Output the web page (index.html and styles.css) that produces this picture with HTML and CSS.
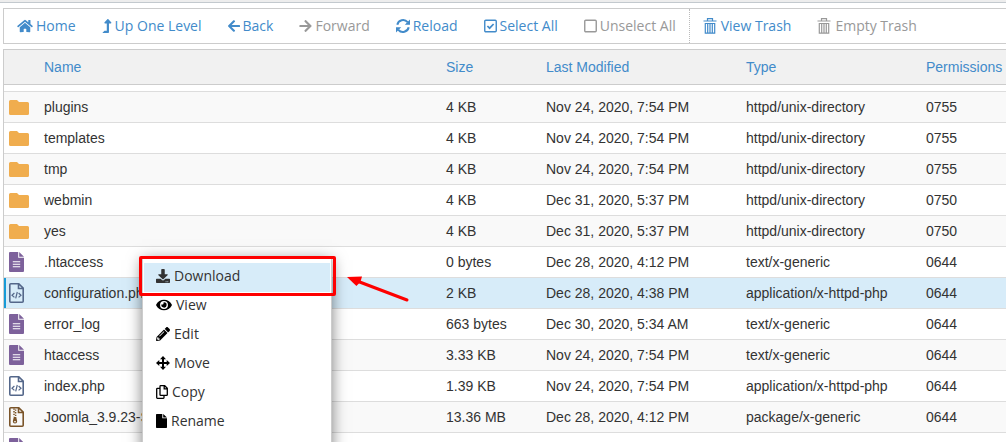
FILE: index.html
```html
<!DOCTYPE html>
<html lang="en">
<head>
<meta charset="utf-8">
<title>File Manager</title>
<link rel="stylesheet" href="styles.css">
</head>
<body>
<svg class="sprite" aria-hidden="true">
  <symbol id="home" viewBox="0 0 576 512"><path d="M280.37 148.26L96 300.11V464a16 16 0 0 0 16 16l112.06-.29a16 16 0 0 0 15.92-16V368a16 16 0 0 1 16-16h64a16 16 0 0 1 16 16v95.64a16 16 0 0 0 16 16.05L464 480a16 16 0 0 0 16-16V300L295.67 148.26a12.19 12.19 0 0 0-15.3 0zM571.6 251.47L488 182.56V44.05a12 12 0 0 0-12-12h-56a12 12 0 0 0-12 12v72.61L318.47 43a48 48 0 0 0-61 0L4.34 251.47a12 12 0 0 0-1.6 16.9l25.5 31A12 12 0 0 0 45.15 301l235.22-193.74a12.19 12.19 0 0 1 15.3 0L530.9 301a12 12 0 0 0 16.9-1.6l25.5-31a12 12 0 0 0-1.7-16.93z"/></symbol>
  <symbol id="up" viewBox="0 0 320 512"><path d="M313.553 119.669L209.587 7.666c-9.485-10.214-25.676-10.229-35.174 0L70.438 119.669C56.232 134.969 67.062 160 88.025 160H152v272H68.024a12 12 0 0 0-8.485 3.515l-56 56C-4.021 499.074 1.333 512 12.024 512H208c13.255 0 24-10.745 24-24V160h63.966c20.878 0 31.851-24.969 17.587-40.331z"/></symbol>
  <symbol id="arrow" viewBox="0 0 448 512"><path d="M257.5 445.1l-22.2 22.2c-9.4 9.4-24.6 9.4-33.9 0L7 273c-9.4-9.4-9.4-24.6 0-33.9L201.4 44.7c9.4-9.4 24.6-9.4 33.9 0l22.2 22.2c9.5 9.5 9.3 25-.4 34.3L136.6 216H424c13.3 0 24 10.7 24 24v32c0 13.3-10.7 24-24 24H136.6l120.5 114.8c9.8 9.3 10 24.8.4 34.3z"/></symbol>
  <symbol id="reload" viewBox="0 0 14 14"><path d="M1.3 5.8A5.9 5.9 0 0 1 11.6 3.2M12.7 8.2A5.9 5.9 0 0 1 2.4 10.8" fill="none" stroke="currentColor" stroke-width="2"/><path d="M14 .6v5.2H8.8zM0 13.4V8.2h5.2z"/></symbol>
  <symbol id="checked" viewBox="0 0 13 14"><rect x=".75" y="1.25" width="11.5" height="11.5" rx="1" fill="none" stroke="currentColor" stroke-width="1.4"/><path d="M3.4 7l2.2 2.2 4-4.2" fill="none" stroke="currentColor" stroke-width="1.7"/></symbol>
  <symbol id="unchecked" viewBox="0 0 13 14"><rect x=".75" y="1.25" width="11.5" height="11.5" rx="1" fill="none" stroke="currentColor" stroke-width="1.4"/></symbol>
  <symbol id="trash" viewBox="0 0 13 16"><path d="M4 2.4V.7h5v1.7M0 3h13M1.6 5.5h9.8M1.8 5v10.2h9.4V5M4.2 5.5v9M6.5 5.5v9M8.8 5.5v9" fill="none" stroke="currentColor" stroke-width="1.2"/></symbol>
  <symbol id="folder" viewBox="0 0 20 15"><path d="M1.5 0H8l2 2h8.5A1.5 1.5 0 0 1 20 3.5v10a1.5 1.5 0 0 1-1.5 1.5h-17A1.5 1.5 0 0 1 0 13.5v-12A1.5 1.5 0 0 1 1.5 0z"/></symbol>
  <symbol id="text-file" viewBox="0 0 15 20"><path d="M1 0h8.2v5.8H15V19a1 1 0 0 1-1 1H1a1 1 0 0 1-1-1V1a1 1 0 0 1 1-1zM10.2 0L15 4.8h-4.8z"/><path d="M3.8 9.7h7.4M3.8 12.2h7.4M3.8 14.7h7.4" stroke="#fff" stroke-width="1.1"/></symbol>
  <symbol id="code-file" viewBox="0 0 15 20"><path d="M1.8.8h8l4.4 4.4v13a1 1 0 0 1-1 1H1.8a1 1 0 0 1-1-1V1.8a1 1 0 0 1 1-1zM9.5.8v4.7h4.7" fill="none" stroke="currentColor" stroke-width="1.6"/><path d="M5.4 10L3 12.2l2.4 2.2M9.6 10l2.4 2.2-2.4 2.2M8.3 9l-1.6 6.4" fill="none" stroke="currentColor" stroke-width="1.2"/></symbol>
  <symbol id="zip-file" viewBox="0 0 15 20"><path d="M1.8.8h8l4.4 4.4v13a1 1 0 0 1-1 1H1.8a1 1 0 0 1-1-1V1.8a1 1 0 0 1 1-1zM9.5.8v4.7h4.7" fill="none" stroke="currentColor" stroke-width="1.6"/><path d="M5 1.5v8M6.6 2.5v8" fill="none" stroke="currentColor" stroke-width="1.5" stroke-dasharray="1.3 1.3"/><path d="M4.8 10h2.4l1 4.2a2.2 2.2 0 1 1-4.4 0zM5 14.2v1h2v-1z" fill-rule="evenodd"/></symbol>
  <symbol id="download" viewBox="0 0 512 512"><path d="M216 0h80c13.3 0 24 10.7 24 24v168h87.7c17.8 0 26.7 21.5 14.1 34.1L269.7 378.3c-7.5 7.5-19.8 7.5-27.3 0L90.1 226.1c-12.6-12.6-3.7-34.1 14.1-34.1H192V24c0-13.3 10.7-24 24-24zm296 376v112c0 13.3-10.7 24-24 24H24c-13.3 0-24-10.7-24-24V376c0-13.3 10.7-24 24-24h146.7l49 49c20.1 20.1 52.5 20.1 72.6 0l49-49H488c13.3 0 24 10.7 24 24zm-124 88c0-11-9-20-20-20s-20 9-20 20 9 20 20 20 20-9 20-20zm64 0c0-11-9-20-20-20s-20 9-20 20 9 20 20 20 20-9 20-20z"/></symbol>
  <symbol id="eye" viewBox="0 0 576 512"><path d="M572.52 241.4C518.29 135.59 410.93 64 288 64S57.68 135.64 3.48 241.41a32.35 32.35 0 0 0 0 29.19C57.71 376.41 165.07 448 288 448s230.32-71.64 284.52-177.41a32.35 32.35 0 0 0 0-29.19zM288 400a144 144 0 1 1 144-144 143.93 143.93 0 0 1-144 144zm0-240a95.31 95.31 0 0 0-25.31 3.79 47.85 47.85 0 0 1-66.9 66.9A95.78 95.78 0 1 0 288 160z"/></symbol>
  <symbol id="pencil" viewBox="0 0 512 512"><path d="M497.9 142.1l-46.1 46.1c-4.7 4.7-12.3 4.7-17 0l-111-111c-4.7-4.7-4.7-12.3 0-17l46.1-46.1c18.7-18.7 49.1-18.7 67.9 0l60.1 60.1c18.8 18.7 18.8 49.1 0 67.9zM284.2 99.8L21.6 362.4.4 483.9c-2.9 16.4 11.4 30.6 27.8 27.8l121.5-21.3 262.6-262.6c4.7-4.7 4.7-12.3 0-17l-111-111c-4.8-4.7-12.4-4.7-17.1 0zM124.1 339.9c-5.5-5.5-5.5-14.3 0-19.8l154-154c5.5-5.5 14.3-5.5 19.8 0s5.5 14.3 0 19.8l-154 154c-5.5 5.5-14.3 5.5-19.8 0zM88 424h48v36.3l-64.5 11.3-31.1-31.1L51.7 376H88v48z"/></symbol>
  <symbol id="move" viewBox="0 0 14 14"><path d="M7 0l3 3.3H8v2.7h2.7V4L14 7l-3.3 3V8H8v2.7h2L7 14l-3-3.3h2V8H3.3v2L0 7l3.3-3v2H6V3.3H4z"/></symbol>
  <symbol id="copy" viewBox="0 0 12 14"><path d="M4.7.7h4l2.6 2.6v6.4a.7.7 0 0 1-.7.7H4.7a.7.7 0 0 1-.7-.7V1.4a.7.7 0 0 1 .7-.7zM8.2.7v3.1h3.1M4 3.4H1.4a.7.7 0 0 0-.7.7v8.5a.7.7 0 0 0 .7.7h5.9a.7.7 0 0 0 .7-.7v-2.2" fill="none" stroke="currentColor" stroke-width="1.3"/></symbol>
  <symbol id="file" viewBox="0 0 11 14"><path d="M.7 0h5.6v4.2H11v9.1a.7.7 0 0 1-.7.7H.7a.7.7 0 0 1-.7-.7V.7A.7.7 0 0 1 .7 0zM7.2 0L11 3.4H7.2z"/></symbol>
</svg>

<nav class="toolbar" aria-label="File actions">
  <button class="tool"><svg class="icon w16"><use href="#home"/></svg>Home</button>
  <button class="tool"><svg class="icon w10"><use href="#up"/></svg>Up One Level</button>
  <button class="tool"><svg class="icon w12"><use href="#arrow"/></svg>Back</button>
  <button class="tool" disabled><svg class="icon w13 flip"><use href="#arrow"/></svg>Forward</button>
  <button class="tool"><svg class="icon w14"><use href="#reload"/></svg>Reload</button>
  <button class="tool"><svg class="icon w13"><use href="#checked"/></svg>Select All</button>
  <button class="tool" disabled><svg class="icon w13"><use href="#unchecked"/></svg>Unselect All</button>
  <div class="trash-tools">
    <button class="tool"><svg class="icon w14 tall"><use href="#trash"/></svg>View Trash</button>
    <button class="tool" disabled><svg class="icon w14 tall"><use href="#trash"/></svg>Empty Trash</button>
  </div>
</nav>

<main class="listing">
  <table class="files">
    <colgroup><col class="c-icon"><col><col class="c-size"><col class="c-date"><col class="c-type"><col class="c-perm"></colgroup>
    <thead><tr><th></th><th>Name</th><th>Size</th><th>Last Modified</th><th>Type</th><th>Permissions</th></tr></thead>
    <tbody>
      <tr class="spacer"><td colspan="6"></td></tr>
      <tr><td><svg class="folder"><use href="#folder"/></svg></td><td>plugins</td><td>4 KB</td><td>Nov 24, 2020, 7:54 PM</td><td>httpd/unix-directory</td><td>0755</td></tr>
      <tr><td><svg class="folder"><use href="#folder"/></svg></td><td>templates</td><td>4 KB</td><td>Nov 24, 2020, 7:54 PM</td><td>httpd/unix-directory</td><td>0755</td></tr>
      <tr><td><svg class="folder"><use href="#folder"/></svg></td><td>tmp</td><td>4 KB</td><td>Nov 24, 2020, 7:54 PM</td><td>httpd/unix-directory</td><td>0755</td></tr>
      <tr><td><svg class="folder"><use href="#folder"/></svg></td><td>webmin</td><td>4 KB</td><td>Dec 31, 2020, 5:37 PM</td><td>httpd/unix-directory</td><td>0750</td></tr>
      <tr><td><svg class="folder"><use href="#folder"/></svg></td><td>yes</td><td>4 KB</td><td>Dec 31, 2020, 5:37 PM</td><td>httpd/unix-directory</td><td>0750</td></tr>
      <tr><td><svg class="doc text"><use href="#text-file"/></svg></td><td>.htaccess</td><td>0 bytes</td><td>Dec 28, 2020, 4:12 PM</td><td>text/x-generic</td><td>0644</td></tr>
      <tr class="selected"><td><svg class="doc code"><use href="#code-file"/></svg></td><td>configuration.php</td><td>2 KB</td><td>Dec 28, 2020, 4:38 PM</td><td>application/x-httpd-php</td><td>0644</td></tr>
      <tr><td><svg class="doc text"><use href="#text-file"/></svg></td><td>error_log</td><td>663 bytes</td><td>Dec 30, 2020, 5:34 AM</td><td>text/x-generic</td><td>0644</td></tr>
      <tr><td><svg class="doc text"><use href="#text-file"/></svg></td><td>htaccess</td><td>3.33 KB</td><td>Nov 24, 2020, 7:54 PM</td><td>text/x-generic</td><td>0644</td></tr>
      <tr><td><svg class="doc code"><use href="#code-file"/></svg></td><td>index.php</td><td>1.39 KB</td><td>Nov 24, 2020, 7:54 PM</td><td>application/x-httpd-php</td><td>0644</td></tr>
      <tr><td><svg class="doc zip"><use href="#zip-file"/></svg></td><td>Joomla_3.9.23-S</td><td>13.36 MB</td><td>Dec 28, 2020, 4:12 PM</td><td>package/x-generic</td><td>0644</td></tr>
      <tr><td><svg class="doc text"><use href="#text-file"/></svg></td><td></td><td></td><td></td><td></td><td></td></tr>
    </tbody>
  </table>
</main>

<div class="menu" role="menu">
  <button class="item active" role="menuitem"><svg class="icon w14"><use href="#download"/></svg>Download</button>
  <button class="item" role="menuitem"><svg class="icon w16"><use href="#eye"/></svg>View</button>
  <button class="item" role="menuitem"><svg class="icon w14"><use href="#pencil"/></svg>Edit</button>
  <button class="item" role="menuitem"><svg class="icon w14"><use href="#move"/></svg>Move</button>
  <button class="item" role="menuitem"><svg class="icon w12"><use href="#copy"/></svg>Copy</button>
  <button class="item" role="menuitem"><svg class="icon w11"><use href="#file"/></svg>Rename</button>
</div>
<div class="marker"></div>
<svg class="pointer" viewBox="0 0 64 28" aria-hidden="true"><path d="M10 5L60 24" stroke="#fe0000" stroke-width="3" stroke-linecap="round"/><path d="M0 1l15-.6-1.6 5.6-4 4z" fill="#fe0000"/></svg>
</body>
</html>
```
FILE: styles.css
```css
* { box-sizing: border-box; }
html { overflow: hidden; }
body {
  margin: 0;
  height: 100vh;
  overflow: hidden;
  position: relative;
  border-top: 2px solid #ededed;
  background: #fff;
  color: #333;
  font: 14px/20px "Liberation Sans", Arial, sans-serif;
}
body::before {
  content: "";
  display: block;
  height: 1px;
  background: #c3c9ce;
}
button {
  margin: 0;
  border: 0;
  background: none;
  font: 14px/20px "Open Sans", sans-serif;
  display: flex;
  align-items: center;
  gap: 3px;
}
.sprite { position: absolute; width: 0; height: 0; }
.icon { height: 14px; flex: none; fill: currentColor; }
.tall { height: 16px; }
.w10 { width: 10px; }
.w11 { width: 11px; }
.w12 { width: 12px; }
.w13 { width: 13px; }
.w14 { width: 14px; }
.w16 { width: 16px; }
.flip { transform: scaleX(-1); }

.toolbar {
  display: flex;
  height: 36px;
  margin: 5px 0 5px 3px;
  border: 1px solid #ccc;
  border-right: 0;
}
.tool { padding: 0 13px; color: #428bca; white-space: nowrap; }
.tool:disabled { color: #999; }
.trash-tools { display: flex; border-left: 1px dotted #bbb; }
.trash-tools .tool { gap: 4px; }

.listing { margin-left: 3px; border: 1px solid #ccc; border-width: 1px 0 0 1px; }
.files { width: 100%; table-layout: fixed; border-collapse: separate; border-spacing: 0; }
.c-icon { width: 40px; }
.c-size { width: 100px; }
.c-date { width: 200px; }
.c-type { width: 180px; }
.c-perm { width: 80px; }
th, td { padding: 0; text-align: left; white-space: nowrap; }
th { height: 35px; background: #f1f1f1; color: #428bca; font-weight: 400; border-bottom: 1px solid #ccc; }
td { height: 31px; border-bottom: 1px solid #ddd; }
td:first-child { padding-left: 5px; }
.spacer td { height: 7px; }
tr:nth-child(even) td { background: #f9f9f9; }
.files .selected td { background: #d7ecf9; }
.files .selected td:first-child { box-shadow: inset 2px 0 #179bd7; }
.folder, .doc { display: block; }
.folder { width: 20px; height: 15px; fill: #f0ad4e; }
.doc { width: 15px; height: 20px; fill: currentColor; }
.text { color: #7d619b; }
.code { color: #54678a; }
.zip { color: #7a5429; }

.menu {
  position: absolute;
  top: 254px;
  left: 142px;
  width: 190px;
  height: 240px;
  padding: 6px 1px;
  border: 1px solid #ccc;
  background: #fff;
  box-shadow: 0 4px 14px rgba(0, 0, 0, 0.5);
}
.item { width: 100%; height: 29px; padding: 0 12px 4px; gap: 4px; color: #333; }
.item .icon { color: #000; }
.active { background: #d7ecf9; }
.active .icon { color: #333; }
.marker {
  position: absolute;
  top: 254px;
  left: 139px;
  width: 197px;
  height: 40px;
  border: 3px solid #fe0000;
  border-radius: 2px;
}
.pointer { position: absolute; top: 274px; left: 347px; width: 64px; height: 28px; }
```
